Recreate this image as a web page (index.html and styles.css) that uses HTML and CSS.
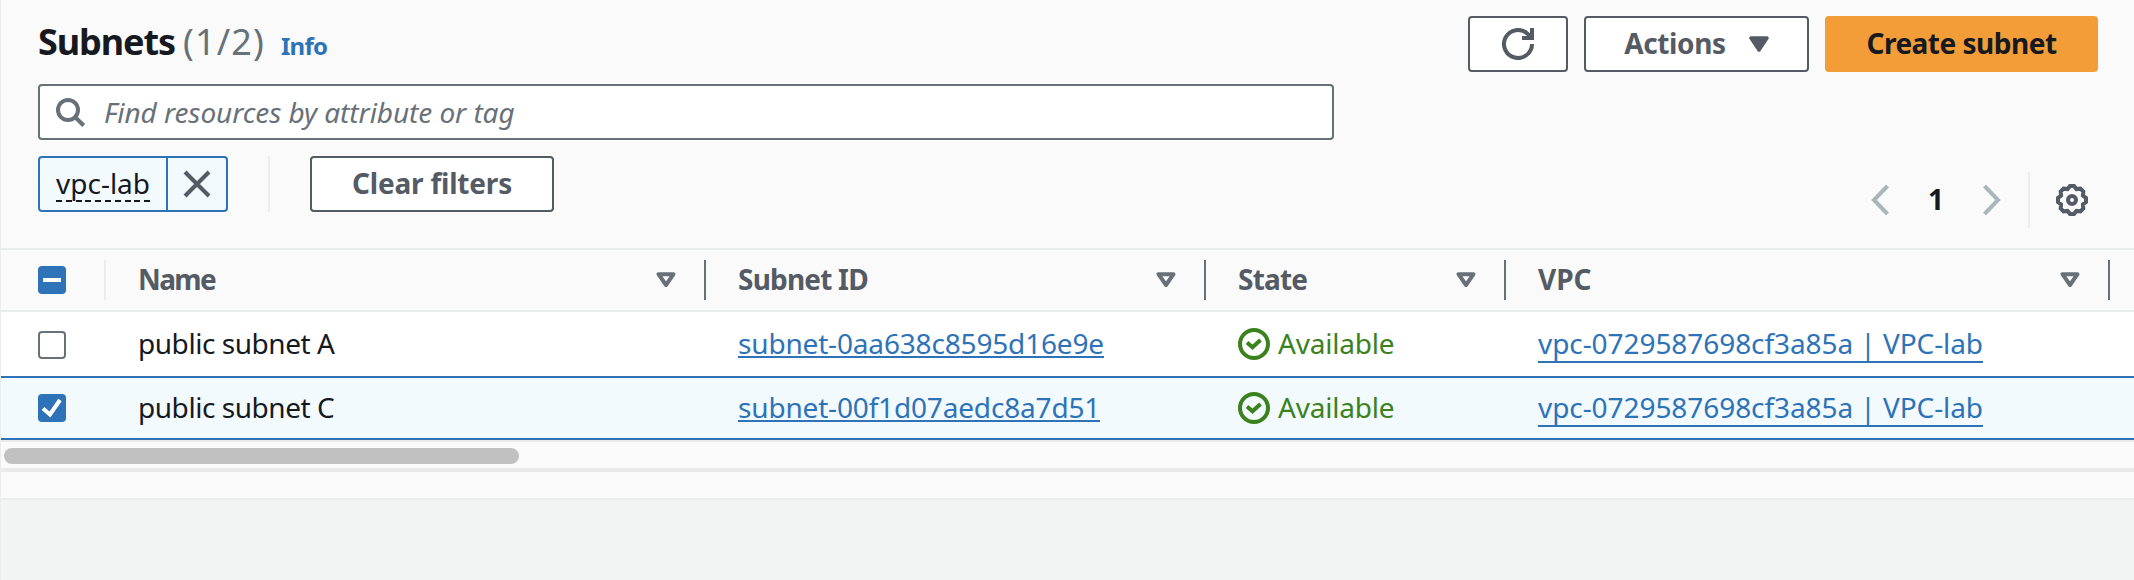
FILE: index.html
```html
<!DOCTYPE html>
<html lang="en">
<head>
<meta charset="utf-8">
<title>Subnets</title>
<link rel="stylesheet" href="styles.css">
</head>
<body>
<svg class="defs" width="0" height="0">
  <symbol id="sort" viewBox="0 0 20 16"><path d="M2.500 2.200h15L10 13z" fill="none" stroke="#687078" stroke-width="4" stroke-linejoin="round"/></symbol>
  <symbol id="ok" viewBox="0 0 32 32"><g fill="none" stroke="#3b821e" stroke-width="4"><circle cx="16" cy="16" r="14"/><path d="M9 14.500l5.500 4.800L22.500 12"/></g></symbol>
</svg>
<main class="panel">
  <header class="top">
    <div class="left">
      <div class="title"><h1>Subnets</h1><span class="count">(1/2)</span><a class="info">Info</a></div>
      <div class="search">
        <svg width="30" height="30" viewBox="0 0 30 30" fill="none" stroke="#687078" stroke-width="4"><circle cx="12" cy="13" r="10"/><path d="M19 20l8.700 8.500"/></svg>
        <span class="placeholder">Find resources by attribute or tag</span>
      </div>
      <div class="filters">
        <div class="token"><span class="token-label"><span class="token-text">vpc-lab</span></span><span class="token-x"><svg width="28" height="28" viewBox="0 0 28 28" stroke="#545b64" stroke-width="4"><path d="M2 2l24 24M26 2l-24 24"/></svg></span></div>
        <i class="sep"></i>
        <button class="btn clear"><span>Clear filters</span></button>
      </div>
    </div>
    <div class="right">
      <div class="actions">
        <button class="btn refresh"><svg width="32" height="32" viewBox="0 0 32 32" fill="none" stroke="#545b64" stroke-width="4"><path d="M30 16A14 14 0 1 1 25.500 5.700l3.500 3.500"/><path d="M30 0v10H20"/></svg></button>
        <button class="btn menu"><span>Actions</span><svg width="20" height="16" viewBox="0 0 20 16"><path d="M2 2h16l-8 12z" fill="#545b64" stroke="#545b64" stroke-width="3.500" stroke-linejoin="round"/></svg></button>
        <button class="btn primary"><span>Create subnet</span></button>
      </div>
      <div class="pager">
        <svg width="20" height="32" viewBox="0 0 20 32" fill="none" stroke="#aab7b8" stroke-width="4"><path d="M17.500 2L4 16l13.500 14"/></svg>
        <span class="page">1</span>
        <svg width="20" height="32" viewBox="0 0 20 32" fill="none" stroke="#aab7b8" stroke-width="4"><path d="M2.500 2L16 16 2.500 30"/></svg>
        <i class="sep"></i>
        <svg width="32" height="32" viewBox="0 0 32 32" fill="none" stroke="#545b64" stroke-width="4"><path d="M14 2h4l2.500 3.100 4-.4 2.800 2.800-.4 4L30 14v4l-3.100 2.500.4 4-2.800 2.800-4-.4L18 30h-4l-2.500-3.100-4 .4-2.800-2.800.4-4L2 18v-4l3.100-2.500-.4-4 2.800-2.800 4 .4z"/><circle cx="16" cy="16" r="4"/></svg>
      </div>
    </div>
  </header>
  <section class="table">
    <div class="row head">
      <div class="cell sel"><span class="box on"><svg width="28" height="28"><path d="M5 14h18" stroke="#fff" stroke-width="4"/></svg></span></div>
      <div class="cell"><span class="t-name">Name</span><svg width="20" height="16"><use href="#sort"/></svg></div>
      <div class="cell"><span class="t-sid">Subnet ID</span><svg width="20" height="16"><use href="#sort"/></svg></div>
      <div class="cell"><span class="t-state">State</span><svg width="20" height="16"><use href="#sort"/></svg></div>
      <div class="cell"><span>VPC</span><svg width="20" height="16"><use href="#sort"/></svg></div>
    </div>
    <div class="row">
      <div class="cell sel"><span class="box off"></span></div>
      <div class="cell"><span class="name">public subnet A</span></div>
      <div class="cell"><a class="link id">subnet-0aa638c8595d16e9e</a></div>
      <div class="cell"><svg width="32" height="32"><use href="#ok"/></svg><span class="avail">Available</span></div>
      <div class="cell"><a class="link vpc">vpc-0729587698cf3a85a | VPC-lab</a></div>
    </div>
    <div class="row selected">
      <div class="cell sel"><span class="box on"><svg width="28" height="28" fill="none" stroke="#fff" stroke-width="4"><path d="M5 14.500l7 6L22 6"/></svg></span></div>
      <div class="cell"><span class="name">public subnet C</span></div>
      <div class="cell"><a class="link id">subnet-00f1d07aedc8a7d51</a></div>
      <div class="cell"><svg width="32" height="32"><use href="#ok"/></svg><span class="avail">Available</span></div>
      <div class="cell"><a class="link vpc">vpc-0729587698cf3a85a | VPC-lab</a></div>
    </div>
  </section>
  <div class="scroll"><div class="thumb"></div></div>
  <div class="foot"></div>
</main>
</body>
</html>
```
FILE: styles.css
```css
* { box-sizing: border-box; }
body { margin: 0; height: 580px; overflow: hidden; border-left: 1px solid #eaeded; background: #f2f3f3; color: #16191f; font: 28px/40px "Noto Sans", "Open Sans", sans-serif; }
svg { display: block; flex: none; }
.defs { position: absolute; }
.panel { height: 500px; background: #fafafa; }
.top { display: flex; justify-content: space-between; height: 248px; padding: 16px 36px 0 37px; }
.left { width: 1296px; }
.title { display: flex; align-items: baseline; height: 68px; line-height: 52px; }
h1 { margin: 0; font-size: 36px; font-weight: 700; letter-spacing: -1.1px; }
.count { margin-left: 8px; font-size: 36px; letter-spacing: 1.2px; color: #687078; }
.info { margin-left: 16px; font-size: 24px; font-weight: 700; letter-spacing: -.8px; color: #2e73b8; }
.search { display: flex; align-items: center; height: 56px; padding-left: 16px; border: 2px solid #687078; border-radius: 4px; background: #fff; }
.placeholder { margin-left: 18px; font-style: italic; letter-spacing: -.07px; color: #687078; }
.filters { display: flex; margin-top: 16px; height: 56px; }
.token { display: flex; width: 190px; border: 2px solid #2e73b8; border-radius: 4px; background: #f2fafd; }
.token-label { display: flex; align-items: center; width: 128px; padding-left: 16px; border-right: 2px solid #2e73b8; }
.token-text { height: 36px; line-height: 34px; background: repeating-linear-gradient(90deg, #16191f 0 6px, transparent 6px 9.8px) 0 100% / 100% 2px no-repeat; }
.token-x { display: flex; flex: 1; align-items: center; justify-content: center; }
.sep { width: 2px; height: 56px; background: #eaeded; }
.filters .sep { margin: 0 40px; }
.btn { display: flex; align-items: center; justify-content: center; height: 56px; padding: 0; border: 2px solid #545b64; border-radius: 4px; background: #fff; color: #545b64; font: 700 28px/40px "Noto Sans", sans-serif; }
.btn span, .page, .cell > span:not(.box) { padding-bottom: 2px; }
.clear { width: 244px; letter-spacing: -.2px; }
.actions { display: flex; gap: 16px; }
.refresh { width: 100px; }
.menu { width: 225px; gap: 23px; letter-spacing: -.4px; }
.primary { width: 273px; border-color: #f29d38; background: #f29d38; color: #16191f; letter-spacing: -.5px; }
.pager { display: flex; align-items: center; justify-content: flex-end; height: 56px; margin-top: 100px; padding-right: 10px; }
.page { width: 92px; text-align: center; font-weight: 700; }
.pager .sep { margin: 0 26px; }
.row { display: grid; grid-template-columns: 105px 600px 500px 300px 604px; height: 64px; }
.head { border: solid #eaeded; border-width: 2px 0; font-weight: 700; color: #545b64; }
.cell { display: flex; align-items: center; padding-left: 32px; }
.sel { padding-left: 37px; }
.head .cell { height: 40px; margin-top: 10px; justify-content: space-between; padding-right: 28px; border-right: 2px solid #687078; }
.head .sel { border-color: #eaeded; }
.t-name { letter-spacing: -1.6px; }
.t-sid, .t-state { letter-spacing: -.8px; }
.row:not(.head) { background: #fff; }
.row.selected { background: #f2fafd; border: solid #2e73b8; border-width: 2px 0; }
.box { width: 28px; height: 28px; border: 2px solid #687078; border-radius: 4px; background: #fff; }
.box.off { margin-top: 2px; }
.box.on { border: 0; background: #2e73b8; }
.name { letter-spacing: -.45px; }
.link { border-bottom: 2px solid; color: #2e73b8; }
.id { height: 28px; line-height: 26px; letter-spacing: -.17px; }
.vpc { height: 38px; line-height: 36px; letter-spacing: -.07px; }
.avail { margin-left: 8px; letter-spacing: -.2px; color: #3b821e; }
.scroll { height: 32px; padding: 6px 3px; border-top: 2px solid #eaeaea; border-bottom: 4px solid #eaeaea; }
.thumb { width: 515px; height: 16px; border-radius: 8px; background: #c1c1c1; }
.foot { height: 28px; border-bottom: 2px solid #eaeded; }
```
